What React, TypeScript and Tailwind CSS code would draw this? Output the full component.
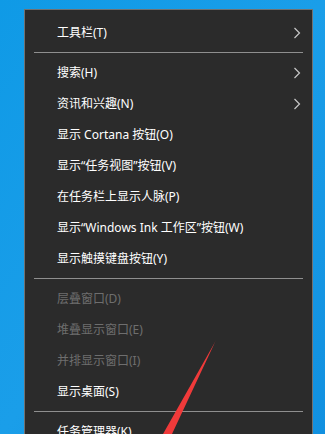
type Item = {
    label: string;
    disabled?: boolean;
    submenu?: boolean;
    separator?: boolean;
}

const items: Item[] = [
    { label: "工具栏(T)", submenu: true },
    { label: "", separator: true },
    { label: "搜索(H)", submenu: true },
    { label: "资讯和兴趣(N)", submenu: true },
    { label: "显示 Cortana 按钮(O)" },
    { label: "显示“任务视图”按钮(V)" },
    { label: "在任务栏上显示人脉(P)" },
    { label: "显示“Windows Ink 工作区”按钮(W)" },
    { label: "显示触摸键盘按钮(Y)" },
    { label: "", separator: true },
    { label: "层叠窗口(D)", disabled: true },
    { label: "堆叠显示窗口(E)", disabled: true },
    { label: "并排显示窗口(I)", disabled: true },
    { label: "显示桌面(S)" },
    { label: "", separator: true },
    { label: "任务管理器(K)" },
]

function Chevron() {
    return (
        <svg width="8" height="12" viewBox="0 0 8 12" fill="none">
            <path d="M1.5 1 L6.5 6 L1.5 11" stroke="#c8c8c8" strokeWidth="1.2" />
        </svg>
    )
}

export default function App() {
    return (
        <div
            className="relative w-[325px] h-[434px] overflow-hidden bg-gradient-to-br from-[#0f9ae6] via-[#1a9ee9] to-[#1190e0] pt-[9px] pl-[24px]"
            style={{ fontFamily: '"Noto Sans", "Noto Sans CJK SC", sans-serif' }}
        >
            {/* menu */}
            <div className="w-[289px] bg-[#2b2b2b] border border-[#717171] pt-[7px] pb-4">
                {items.map((item, i) =>
                    item.separator ? (
                        <div key={i} className="py-[4px] px-[9px]">
                            <div className="h-px bg-[#8f8f8f]" />
                        </div>
                    ) : (
                        <div key={i} className="h-[31px] flex items-center justify-between pl-[32px] pr-[11px]">
                            <span className={`text-[12px] leading-none ${item.disabled ? "text-[#6e6e6e]" : "text-white"}`}>
                                {item.label}
                            </span>
                            {item.submenu && <Chevron />}
                        </div>
                    )
                )}
            </div>
            {/* red annotation arrow */}
            <svg className="absolute left-0 top-0" width="325" height="434" viewBox="0 0 325 434">
                <polygon points="216,340 214.5,343 163,434 172,434" fill="#f03a3a" />
            </svg>
        </div>
    )
}
